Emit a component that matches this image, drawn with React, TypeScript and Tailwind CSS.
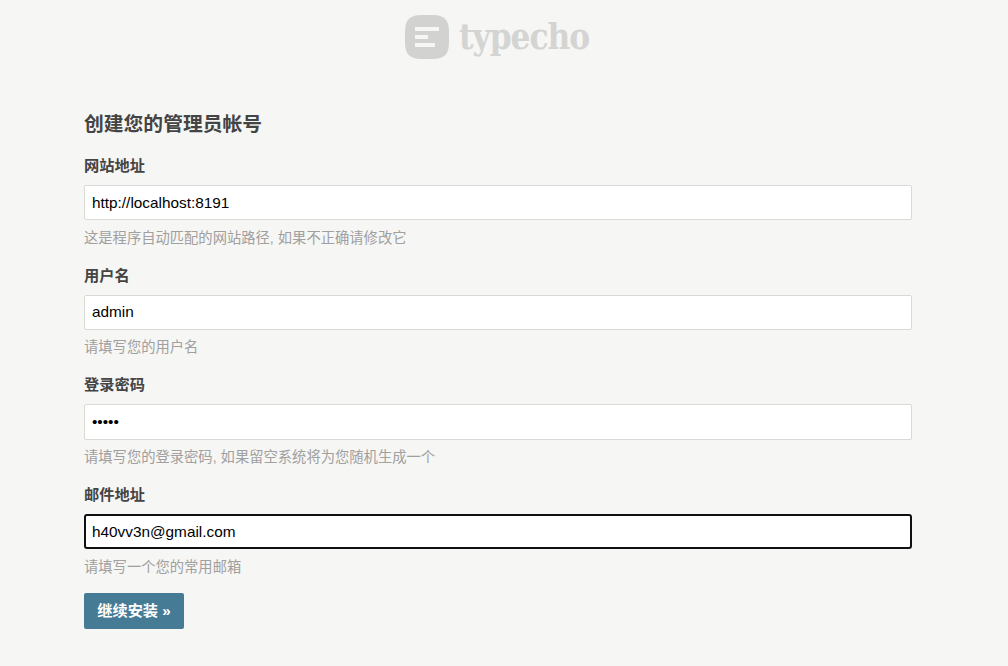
const font = { fontFamily: '"Liberation Sans", "Noto Sans CJK SC", sans-serif' };

function Field({ label, value, help, type = "text", focused = false }: { label: string; value: string; help: string; type?: string; focused?: boolean }) {
  return (
    <div className="h-[109.67px]">
      <div className="h-[20px] text-[15.25px] leading-[20px] font-bold text-[#444]">{label}</div>
      <div className="mt-[9px] h-[35.3px]">
        <input
          readOnly
          type={type}
          value={value}
          className={
            focused
              ? "block w-full h-[35.3px] px-[6px] text-[15.35px] text-black bg-white rounded-[3px] border-2 border-[#101010] outline-none"
              : "block w-full h-[35.3px] px-[7px] text-[15.35px] text-black bg-white rounded-[2px] border border-[#d9d9d6] outline-none"
          }
          style={font}
        />
      </div>
      <div className="mt-[7.5px] h-[20px] text-[14.3px] leading-[20px] text-[#a0a0a0]">{help}</div>
    </div>
  );
}

export default function App() {
  return (
    <div className="min-h-[666px] bg-[#f6f6f4] overflow-hidden" style={font}>
      <div className="h-[72px] flex justify-start items-start pt-[15px] pl-[405px]">
        <div className="flex items-center gap-[10px]">
          <svg width="44" height="44" viewBox="0 0 44 44">
            <path d="M16 0H28C39 0 44 5 44 16V28C44 39 39 44 28 44H16C5 44 0 39 0 28V16C0 5 5 0 16 0Z" fill="#d2d2d0" />
            <rect x="10" y="12" width="24" height="4" rx="0.5" fill="#f6f6f4" />
            <rect x="10" y="20" width="13" height="4" rx="0.5" fill="#f6f6f4" />
            <rect x="10" y="28" width="20" height="4" rx="0.5" fill="#f6f6f4" />
          </svg>
          <span className="text-[34.8px] leading-[38px] font-bold text-[#d4d4d2] tracking-[-1px]" style={{ fontFamily: '"DejaVu Serif Condensed", "DejaVu Serif", serif', fontStretch: "condensed" }}>typecho</span>
        </div>
      </div>
      <div className="mx-[84px] w-[828px]">
        <h2 className="mt-[37px] h-[30px] text-[19.8px] leading-[30px] font-bold text-[#444]">创建您的管理员帐号</h2>
        <div className="mt-[16.9px]">
          <Field label="网站地址" value="http://localhost:8191" help="这是程序自动匹配的网站路径, 如果不正确请修改它" />
          <Field label="用户名" value="admin" help="请填写您的用户名" />
          <Field label="登录密码" value="admin" type="password" help="请填写您的登录密码, 如果留空系统将为您随机生成一个" />
          <Field label="邮件地址" value="h40vv3n@gmail.com" help="请填写一个您的常用邮箱" focused />
        </div>
        <button className="mt-[-1.6px] block w-[100px] h-[36px] rounded-[2px] bg-[#467b96] text-white text-[15.2px] font-bold">继续安装 »</button>
      </div>
    </div>
  );
}
